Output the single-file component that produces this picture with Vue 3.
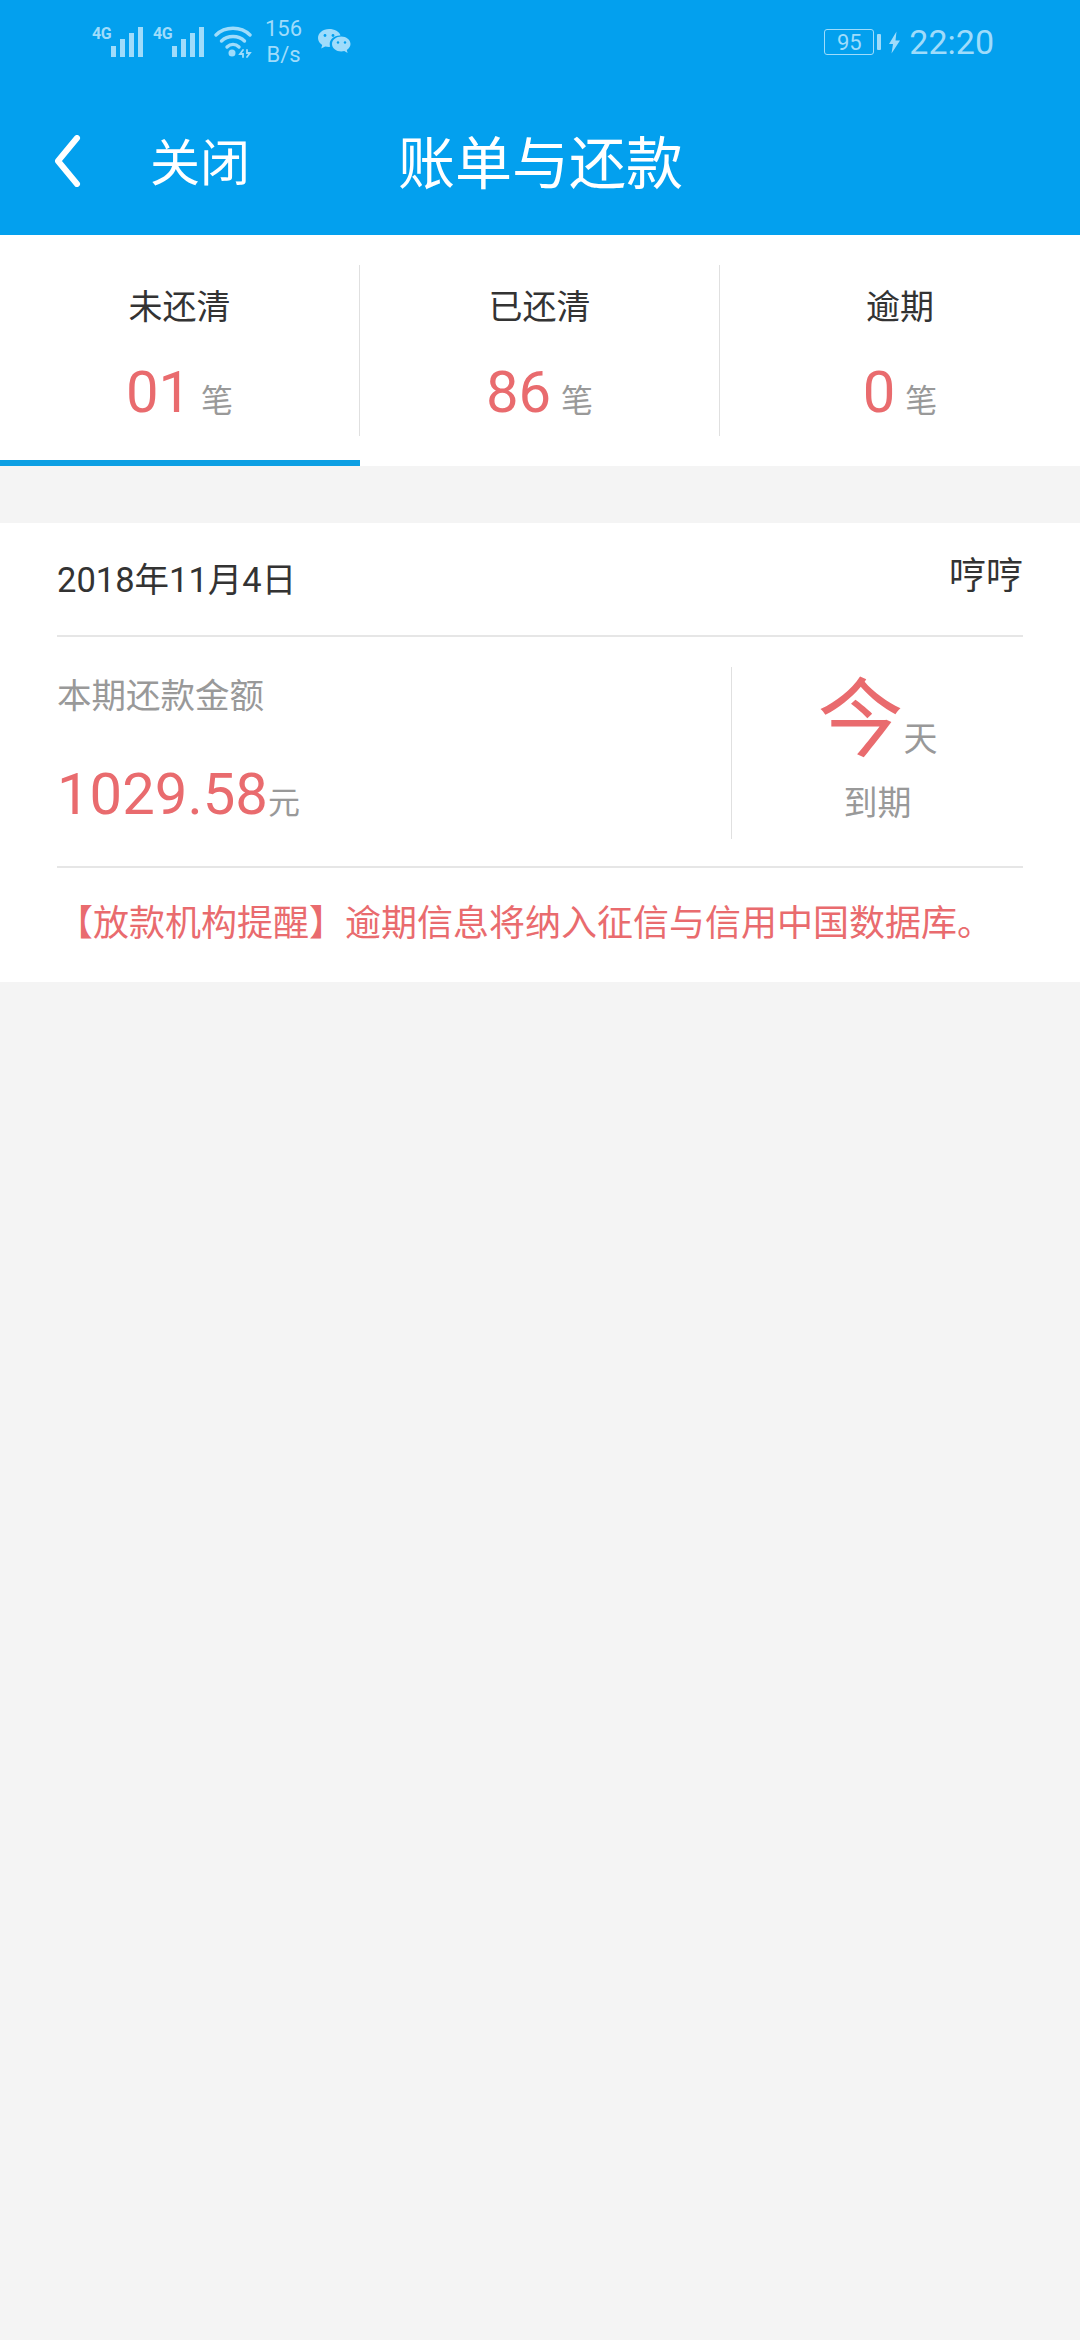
<script setup>
const tabs = [
  { label: '未还清', count: '01' },
  { label: '已还清', count: '86' },
  { label: '逾期', count: '0' },
]
const bars = [11, 18, 24, 30]
</script>

<template>
  <div class="page">
    <header class="top">
      <div class="status-bar">
        <div class="status-left">
          <div class="signal" v-for="n in 2" :key="n">
            <span class="net">4G</span>
            <span class="bars">
              <i v-for="h in bars" :key="h" class="bar" :style="{ height: h + 'px' }"></i>
            </span>
          </div>
          <svg class="wifi" width="38" height="32" viewBox="0 0 38 32" fill="none" stroke="#9fdcfb" stroke-width="3.4" stroke-linecap="round">
            <path d="M2 9C11 0 27 0 36 9" />
            <path d="M7.5 15C13.5 9 24.5 9 30.5 15" />
            <path d="M13 21C16.5 17.5 21.500 17.500 25 21" />
            <circle cx="18" cy="27" r="3.500" fill="#9fdcfb" stroke="none" />
            <path d="M29 24l-3 4h3v3M33 24v3h3l-3 4" stroke-width="1.800" />
          </svg>
          <div class="speed">
            <span>156</span>
            <span>B/s</span>
          </div>
          <svg class="wechat" width="34" height="28" viewBox="0 0 34 28" fill="#9fdcfb">
            <path d="M12 1C5.800 1 1 5 1 10c0 2.900 1.600 5.300 4.200 7l-1 3.600 4-2.200c1.200.3 2.500.5 3.800.5.400 0 .8 0 1.200-.1-.3-1-.5-1.800-.5-2.800 0-4.800 4.400-8.500 10-8.500h.8C22.400 3.500 17.600 1 12 1z" />
            <path d="M33.500 16c0-4.200-4.200-7.500-9.200-7.500S15 11.800 15 16s4.200 7.500 9.300 7.500c1 0 2-.1 3-.4l3.300 1.900-.8-3c2.200-1.500 3.700-3.600 3.700-6z" />
            <g fill="#03a0ee">
              <circle cx="8" cy="7.500" r="1.400" />
              <circle cx="16" cy="7.500" r="1.400" />
              <circle cx="21" cy="14.500" r="1.200" />
              <circle cx="28" cy="14.500" r="1.200" />
            </g>
          </svg>
        </div>
        <div class="status-right">
          <div class="battery"><span>95</span></div>
          <i class="battery-nub"></i>
          <svg class="bolt" width="11" height="23" viewBox="0 0 11 22" fill="#9fdcfb">
            <path d="M7.500 0L0 12.500h4L2.500 22 11 9H6.500z" />
          </svg>
          <span class="time">22:20</span>
        </div>
      </div>
      <div class="nav-bar">
        <svg class="back" width="27" height="52" viewBox="0 0 27 52" fill="none" stroke="#fff" stroke-width="6" stroke-linecap="round" stroke-linejoin="round">
          <path d="M23 3L4 26l19 23" />
        </svg>
        <span class="close">关闭</span>
        <span class="title">账单与还款</span>
      </div>
    </header>

    <section class="tabs">
      <div v-for="(tab, i) in tabs" :key="tab.label" class="tab" :class="{ active: i === 0 }">
        <div class="tab-inner">
          <div class="tab-label">{{ tab.label }}</div>
          <div class="tab-count">
            <span class="count-num">{{ tab.count }}</span>
            <span class="count-unit">笔</span>
          </div>
        </div>
      </div>
    </section>

    <section class="card">
      <div class="card-head">
        <span class="date">2018年11月4日</span>
        <span class="name">哼哼</span>
      </div>
      <div class="card-body">
        <div class="amount-col">
          <div class="amount-label">本期还款金额</div>
          <div class="amount">
            <span class="amount-num">1029.58</span><span class="amount-unit">元</span>
          </div>
        </div>
        <div class="due-col">
          <div class="due-top">
            <span class="due-big">今</span>
            <span class="due-small">天</span>
          </div>
          <div class="due-text">到期</div>
        </div>
      </div>
      <div class="notice">【放款机构提醒】逾期信息将纳入征信与信用中国数据库。</div>
    </section>
  </div>
</template>

<style>
html,
body {
  margin: 0;
  background: #f4f4f4;
}
</style>

<style scoped>
.page {
  min-height: 2340px;
  background: #f4f4f4;
  font-family: "Roboto", "Noto Sans CJK SC", sans-serif;
}

.top {
  height: 235px;
  background: #03a0ee;
  box-sizing: border-box;
}

.status-bar {
  height: 84px;
  padding: 0 86px 0 92px;
  display: flex;
  justify-content: space-between;
  align-items: center;
  color: #9fdcfb;
}

.status-left,
.status-right {
  display: flex;
  align-items: center;
}

.signal {
  width: 51px;
  height: 30px;
  margin-right: 10px;
  display: flex;
  justify-content: space-between;
}

.net {
  font-size: 16px;
  line-height: 14px;
  font-weight: 700;
  letter-spacing: -0.5px;
}

.bars {
  display: flex;
  align-items: flex-end;
  gap: 4px;
}

.bar {
  width: 5px;
  background: #9fdcfb;
}

.wifi {
  margin: 0 13px 0 0;
}

.speed {
  display: flex;
  flex-direction: column;
  align-items: center;
  font-size: 22px;
  line-height: 26px;
  margin-right: 15px;
}

.battery {
  width: 50px;
  height: 26px;
  box-sizing: border-box;
  border: 1.500px solid #9fdcfb;
  border-radius: 3px;
  display: flex;
  justify-content: center;
  align-items: center;
  font-size: 22px;
}

.battery-nub {
  width: 4px;
  height: 16px;
  margin: 0 8px 0 3px;
  background: #9fdcfb;
  border-radius: 1px;
}

.bolt {
  margin-right: 9px;
}

.time {
  font-size: 34px;
  line-height: 40px;
}

.nav-bar {
  height: 151px;
  padding: 0 0 0 54px;
  display: flex;
  align-items: flex-start;
  color: #fff;
}

.back {
  margin-top: 51px;
}

.close {
  margin-left: 69px;
  font-size: 50px;
  line-height: 58px;
  margin-top: 51px;
}

.title {
  margin-left: 148px;
  font-size: 57px;
  line-height: 66px;
  margin-top: 48px;
}

.tabs {
  height: 231px;
  background: #fff;
  display: flex;
  margin-bottom: 57px;
}

.tab {
  flex: 1;
  box-sizing: border-box;
  padding-top: 30px;
}

.tab.active {
  border-bottom: 6px solid #0d9fe3;
}

.tab-inner {
  height: 171px;
  box-sizing: border-box;
  border-right: 1px solid #e0e0e0;
  display: flex;
  flex-direction: column;
  align-items: center;
}

.tab:last-child .tab-inner {
  border-right: none;
}

.tab-label {
  margin-top: 20px;
  font-size: 34px;
  line-height: 44px;
  color: #333;
}

.tab-count {
  margin-top: 26px;
  display: flex;
  align-items: baseline;
  gap: 10px;
}

.count-num {
  font-size: 58px;
  line-height: 74px;
  color: #e96b6e;
}

.count-unit {
  font-size: 32px;
  color: #999;
}

.card {
  background: #fff;
  padding: 0 57px;
  height: 459px;
  box-sizing: border-box;
}

.card-head {
  height: 112px;
  border-bottom: 2px solid #e6e6e6;
  display: flex;
  justify-content: space-between;
  box-sizing: content-box;
}

.date {
  margin-top: 36px;
  font-size: 34.500px;
  line-height: 42px;
  color: #333;
}

.name {
  margin-top: 32px;
  font-size: 37px;
  line-height: 44px;
  color: #333;
}

.card-body {
  height: 231px;
  box-sizing: border-box;
  padding-top: 30px;
  border-bottom: 2px solid #e6e6e6;
  display: flex;
}

.amount-col {
  width: 675px;
  height: 172px;
  box-sizing: border-box;
  border-right: 1px solid #e0e0e0;
}

.amount-label {
  font-size: 34.500px;
  line-height: 44px;
  margin-top: 7px;
  color: #999;
}

.amount {
  margin-top: 40px;
  display: flex;
  align-items: baseline;
}

.amount-num {
  font-size: 58px;
  line-height: 72px;
  color: #e96b6e;
}

.amount-unit {
  font-size: 32px;
  color: #999;
}

.due-col {
  flex: 1;
  display: flex;
  flex-direction: column;
  align-items: center;
}

.due-top {
  display: flex;
  align-items: flex-end;
  height: 98px;
  margin-top: 5px;
}

.due-big {
  font-size: 86px;
  line-height: 98px;
  color: #e96b6e;
}

.due-small {
  font-size: 34px;
  line-height: 44px;
  margin-bottom: 9px;
  color: #999;
}

.due-text {
  margin-top: 11px;
  font-size: 34px;
  line-height: 44px;
  color: #999;
}

.notice {
  padding-top: 33px;
  font-size: 36px;
  line-height: 46px;
  white-space: nowrap;
  color: #e96b6e;
}
</style>
